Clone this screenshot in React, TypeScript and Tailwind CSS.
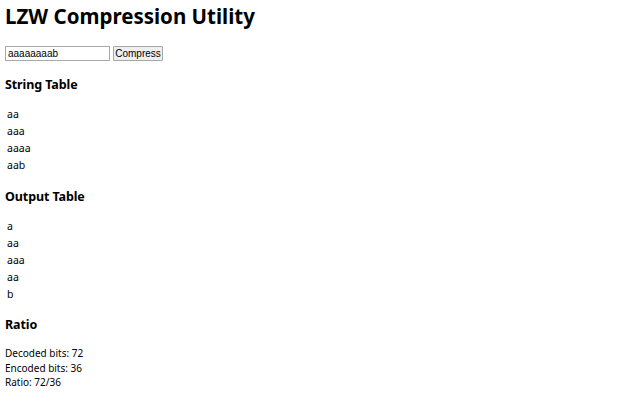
import { useState } from 'react'

function lzw(input: string) {
  const dict = new Map<string, number>()
  for (const ch of input) if (!dict.has(ch)) dict.set(ch, dict.size)
  const added: string[] = []
  const out: string[] = []
  let w = ''
  for (const c of input) {
    const wc = w + c
    if (dict.has(wc)) w = wc
    else {
      out.push(w)
      dict.set(wc, dict.size)
      added.push(wc)
      w = c
    }
  }
  if (w) out.push(w)
  return { added, out }
}

export default function App() {
  const [value, setValue] = useState('aaaaaaaab')
  const [text, setText] = useState('aaaaaaaab')
  const { added, out } = lzw(text)
  const decoded = text.length * 8
  const encoded = out.length * 8 - 4

  return (
    <div className="bg-white text-black min-h-screen pl-[5px] w-[640px] h-[400px] overflow-hidden font-['Noto_Sans',sans-serif]">
      <h1 className="text-[20.5px] font-bold leading-[26px] pt-[3px]">LZW Compression Utility</h1>
      <div className="flex items-center gap-[3px] mt-[17px] h-[15px]">
        <input
          value={value}
          onChange={e => setValue(e.target.value)}
          className="w-[105px] h-[15px] border border-[#a9a9a9] px-[2px] text-[10px] leading-[13px] font-['Liberation_Sans',sans-serif] outline-none"
        />
        <button
          onClick={() => setText(value)}
          className="w-[50px] h-[15px] border border-[#a6a6a6] bg-[#efefef] text-[10px] leading-[13px] font-['Liberation_Sans',sans-serif] rounded-[1px]"
        >
          Compress
        </button>
      </div>

      <h3 className="text-[12.5px] font-bold leading-[18px] mt-[15px] tracking-[-0.1px]">String Table</h3>
      <ul className="mt-[12px] pl-[2px] text-[10.5px]">
        {added.map((s, i) => (
          <li key={i} className="h-[17px] leading-[17px]">{s}</li>
        ))}
      </ul>

      <h3 className="text-[12.5px] font-bold leading-[18px] mt-[14px] tracking-[-0.1px]">Output Table</h3>
      <ul className="mt-[12px] pl-[2px] text-[10.5px]">
        {out.map((s, i) => (
          <li key={i} className="h-[17px] leading-[17px]">{s}</li>
        ))}
      </ul>

      <h3 className="text-[12.5px] font-bold leading-[18px] mt-[13px] tracking-[-0.1px]">Ratio</h3>
      <div className="mt-[12px] text-[10px] leading-[14.5px]">
        <div>Decoded bits: {decoded}</div>
        <div>Encoded bits: {encoded}</div>
        <div>Ratio: {decoded}/{encoded}</div>
      </div>
    </div>
  )
}
